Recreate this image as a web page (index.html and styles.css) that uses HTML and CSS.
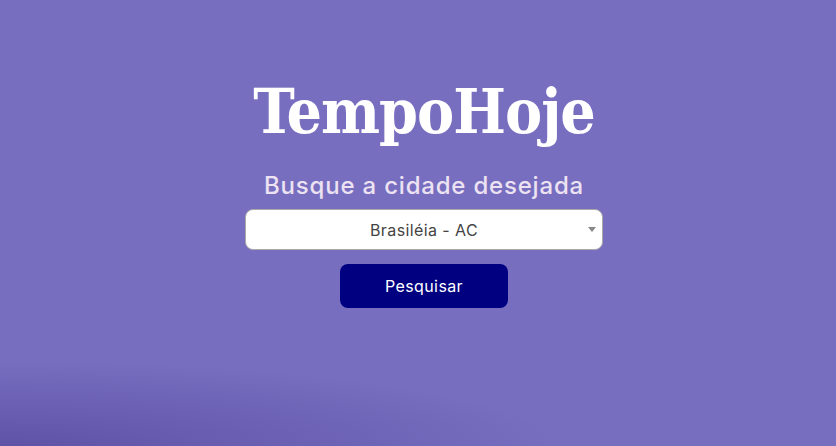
FILE: index.html
```html
<!DOCTYPE html>
<html lang="pt-BR">
<head>
<meta charset="utf-8">
<title>TempoHoje</title>
<link rel="stylesheet" href="styles.css">
</head>
<body>
<main class="page">
  <h1 class="title">TempoHoje</h1>
  <h2 class="subtitle">Busque a cidade desejada</h2>
  <div class="select-wrap">
    <select class="city">
      <option>Brasiléia - AC</option>
    </select>
    <span class="arrow"></span>
  </div>
  <button class="search" type="button">Pesquisar</button>
</main>
</body>
</html>
```
FILE: styles.css
```css
html, body {
  margin: 0;
  height: 100%;
}
body {
  background-color: #776ec0;
  background-image: radial-gradient(ellipse 560px 85px at 0px 446px, rgba(70, 55, 140, 0.5), rgba(70, 55, 140, 0) 100%);
  font-family: "Inter", sans-serif;
  overflow: hidden;
}
.page {
  display: flex;
  flex-direction: column;
  align-items: center;
  padding-top: 72px;
  padding-left: 12px;
}
.title {
  margin: 0;
  font-family: "DejaVu Serif Condensed", "DejaVu Serif", serif;
  font-weight: bold;
  font-size: 62px;
  line-height: 80px;
  color: #ffffff;
  letter-spacing: -1px;
}
.subtitle {
  margin: 18px 0 0;
  font-family: "Inter", sans-serif;
  font-weight: 500;
  font-size: 24px;
  line-height: 32px;
  color: #ece2f2;
  letter-spacing: 0.8px;
}
.select-wrap {
  position: relative;
  margin-top: 7px;
  width: 358px;
  height: 41px;
}
.city {
  appearance: none;
  -webkit-appearance: none;
  width: 100%;
  height: 41px;
  box-sizing: border-box;
  border: 1px solid #a9a9a9;
  border-radius: 8px;
  background: #ffffff;
  text-align: center;
  text-align-last: center;
  font-family: "Inter", sans-serif;
  font-size: 16px;
  color: #444444;
  letter-spacing: 0.4px;
  padding: 0 20px;
}
.arrow {
  position: absolute;
  right: 7px;
  top: 18px;
  width: 0;
  height: 0;
  border-left: 4px solid transparent;
  border-right: 4px solid transparent;
  border-top: 5px solid #888888;
}
.search {
  margin-top: 14px;
  width: 168px;
  height: 44px;
  border: none;
  border-radius: 8px;
  background: #000080;
  color: #ffffff;
  font-family: "Inter", sans-serif;
  font-size: 16px;
  letter-spacing: 0.4px;
}
```
